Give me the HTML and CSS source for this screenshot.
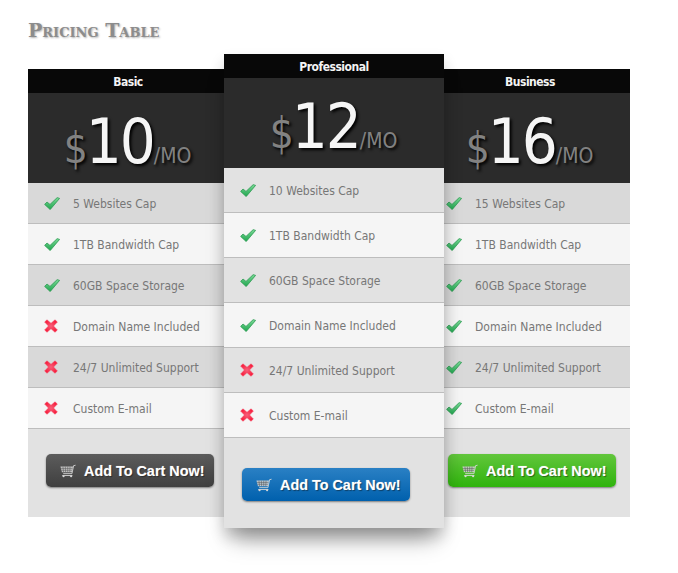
FILE: index.html
```html
<!DOCTYPE html>
<html lang="en">
<head>
<meta charset="utf-8">
<title>Pricing Table</title>
<link rel="stylesheet" href="styles.css">
</head>
<body>
<svg class="defs" width="0" height="0" aria-hidden="true">
  <defs>
    <linearGradient id="gc" x1="0" y1="0" x2="0" y2="1"><stop offset="0" stop-color="#7ad896"/><stop offset="1" stop-color="#1fa64e"/></linearGradient>
    <radialGradient id="gx"><stop offset="0" stop-color="#f7607a"/><stop offset="1" stop-color="#f8203f"/></radialGradient>
    <symbol id="yes" viewBox="0 0 16 13">
      <path d="M.6 7.4 L3 5 L6 7.4 L13.2 .6 L15.6 1.4 L6.2 12.6 Z" fill="url(#gc)" stroke="#1f9347" stroke-width=".7" stroke-linejoin="round"/>
    </symbol>
    <symbol id="no" viewBox="0 0 14 14">
      <path d="M3 .8 L7 4.3 L11 .8 L13.4 3 L9.6 7 L13.4 11 L11 13.3 L7 9.7 L3 13.3 L.6 11 L4.4 7 L.6 3 Z" fill="url(#gx)" stroke="#f0506a" stroke-width=".5" stroke-linejoin="round"/>
    </symbol>
    <symbol id="cart" viewBox="0 0 18 15">
      <path d="M17.5 1 L15.3 1.5 L13.4 10.5 L3.6 10.5" fill="none" stroke="currentColor" stroke-width="1"/>
      <path d="M.5 2.5 H14.6 L13.3 8.8 H2.2 Z" fill="currentColor" opacity=".85"/>
      <path d="M3.3 2.5 L4 8.8 M6 2.5 L6.3 8.8 M8.7 2.5 V8.8 M11.3 2.5 L11 8.8 M1 4.6 H14 M1.6 6.7 H13.6" stroke="#555" stroke-width=".6" fill="none"/>
      <path d="M2.5 12.6 H14" stroke="currentColor" stroke-width="1"/>
      <circle cx="4" cy="13.4" r="1.2" fill="currentColor"/><circle cx="12.5" cy="13.4" r="1.2" fill="currentColor"/>
    </symbol>
  </defs>
</svg>

<main class="page">
  <h1 class="title">Pricing Table</h1>
  <div class="table">

    <section class="plan plan-basic">
      <h2 class="plan-name">Basic</h2>
      <div class="price"><span class="cur">$</span><span class="num">10</span><span class="per">/MO</span></div>
      <ul class="features">
        <li><svg class="ic-yes"><use href="#yes"/></svg><span>5 Websites Cap</span></li>
        <li><svg class="ic-yes"><use href="#yes"/></svg><span>1TB Bandwidth Cap</span></li>
        <li><svg class="ic-yes"><use href="#yes"/></svg><span>60GB Space Storage</span></li>
        <li><svg class="ic-no"><use href="#no"/></svg><span>Domain Name Included</span></li>
        <li><svg class="ic-no"><use href="#no"/></svg><span>24/7 Unlimited Support</span></li>
        <li><svg class="ic-no"><use href="#no"/></svg><span>Custom E-mail</span></li>
      </ul>
      <div class="buy"><a class="btn btn-dark" href="#"><svg class="ic-cart"><use href="#cart"/></svg>Add To Cart Now!</a></div>
    </section>

    <section class="plan plan-pro">
      <h2 class="plan-name">Professional</h2>
      <div class="price"><span class="cur">$</span><span class="num">12</span><span class="per">/MO</span></div>
      <ul class="features">
        <li><svg class="ic-yes"><use href="#yes"/></svg><span>10 Websites Cap</span></li>
        <li><svg class="ic-yes"><use href="#yes"/></svg><span>1TB Bandwidth Cap</span></li>
        <li><svg class="ic-yes"><use href="#yes"/></svg><span>60GB Space Storage</span></li>
        <li><svg class="ic-yes"><use href="#yes"/></svg><span>Domain Name Included</span></li>
        <li><svg class="ic-no"><use href="#no"/></svg><span>24/7 Unlimited Support</span></li>
        <li><svg class="ic-no"><use href="#no"/></svg><span>Custom E-mail</span></li>
      </ul>
      <div class="buy"><a class="btn btn-blue" href="#"><svg class="ic-cart"><use href="#cart"/></svg>Add To Cart Now!</a></div>
    </section>

    <section class="plan plan-biz">
      <h2 class="plan-name">Business</h2>
      <div class="price"><span class="cur">$</span><span class="num">16</span><span class="per">/MO</span></div>
      <ul class="features">
        <li><svg class="ic-yes"><use href="#yes"/></svg><span>15 Websites Cap</span></li>
        <li><svg class="ic-yes"><use href="#yes"/></svg><span>1TB Bandwidth Cap</span></li>
        <li><svg class="ic-yes"><use href="#yes"/></svg><span>60GB Space Storage</span></li>
        <li><svg class="ic-yes"><use href="#yes"/></svg><span>Domain Name Included</span></li>
        <li><svg class="ic-yes"><use href="#yes"/></svg><span>24/7 Unlimited Support</span></li>
        <li><svg class="ic-yes"><use href="#yes"/></svg><span>Custom E-mail</span></li>
      </ul>
      <div class="buy"><a class="btn btn-green" href="#"><svg class="ic-cart"><use href="#cart"/></svg>Add To Cart Now!</a></div>
    </section>

  </div>
</main>
</body>
</html>
```
FILE: styles.css
```css
* { box-sizing: border-box; }
html, body { margin: 0; padding: 0; background: #fff; }
body { font-family: "DejaVu Sans", "Noto Sans", sans-serif; font-stretch: condensed; overflow: hidden; height: 573px; }
.defs { display: block; height: 0; }
.page { padding: 19px 0 0 28px; }

.title {
  margin: 0;
  height: 35px;
  font-family: "DejaVu Serif", "Liberation Serif", serif;
  font-stretch: normal;
  font-variant: small-caps;
  font-weight: 700;
  font-size: 19px;
  line-height: 22px;
  color: #8c8c8c;
  text-shadow: 1px 1px 2px rgba(0,0,0,.3);
}

.table { display: flex; align-items: flex-start; }
.plan { width: 200px; flex: none; margin-top: 15px; }
.plan-pro { width: 220px; margin: 0 0 0 -4px; position: relative; z-index: 1; box-shadow: 0 8px 14px rgba(0,0,0,.16), 0 18px 22px -8px rgba(0,0,0,.38); }
.plan-biz { margin-left: -14px; }

.plan-name {
  margin: 0;
  height: 24px;
  padding-top: 1px;
  background: #080808;
  color: #f4f4f4;
  font-size: 12px;
  letter-spacing: -.5px;
  font-weight: 700;
  line-height: 24px;
  text-align: center;
}

.price {
  height: 90px;
  background: #2b2b2b;
  display: flex;
  justify-content: center;
  align-items: baseline;
  padding-top: 17px;
  padding-right: 1px;
  text-shadow: 2px 2px 3px #000;
}
.cur { font-size: 42px; line-height: 64px; color: #828282; letter-spacing: -2px; }
.num { font-size: 63px; line-height: 64px; color: #f5f5f5; letter-spacing: -2px; }
.per { font-size: 21px; line-height: 64px; color: #828282; }

.features { list-style: none; margin: 0; padding: 0; }
.features li {
  height: 41px;
  padding-left: 16px;
  display: flex;
  align-items: center;
  background: #d9d9d9;
  border-bottom: 1px solid #bdbdbd;
  color: #777;
  font-size: 12px;
}
.features span { padding-top: 2px; }
.features li:nth-child(even) { background: #f5f5f5; }
.plan-pro .features li { height: 45px; background: #e2e2e2; }
.plan-pro .features li:nth-child(even) { background: #f5f5f5; }

.ic-yes, .ic-no { flex: none; }
.ic-yes { width: 16px; height: 13px; margin-right: 13px; }
.ic-no { width: 14px; height: 14px; margin-right: 15px; }

.buy { height: 88px; background: #e2e2e2; padding: 25px 0 0 18px; }
.plan-pro .buy { height: 90px; padding-top: 30px; }

.btn {
  display: flex;
  align-items: center;
  width: 168px;
  height: 33px;
  padding-left: 14px;
  border-radius: 5px;
  color: #fff;
  font-family: "Liberation Sans", Arial, sans-serif;
  font-stretch: normal;
  font-weight: 700;
  font-size: 14.4px;
  text-decoration: none;
  text-shadow: 1px 1px 1px rgba(0,0,0,.45), 0 0 1px rgba(255,255,255,.5);
  box-shadow: 0 1px 2px rgba(0,0,0,.45);
}
.ic-cart { width: 16px; height: 14px; margin-right: 8px; flex: none; color: #d8d8d8; }
.btn-dark { background: linear-gradient(#5c5c5c, #3f3f3f); }
.btn-blue { background: linear-gradient(#2a80c4, #0060ad); }
.btn-green { background: linear-gradient(#62c63c, #2fb30d); }
```
